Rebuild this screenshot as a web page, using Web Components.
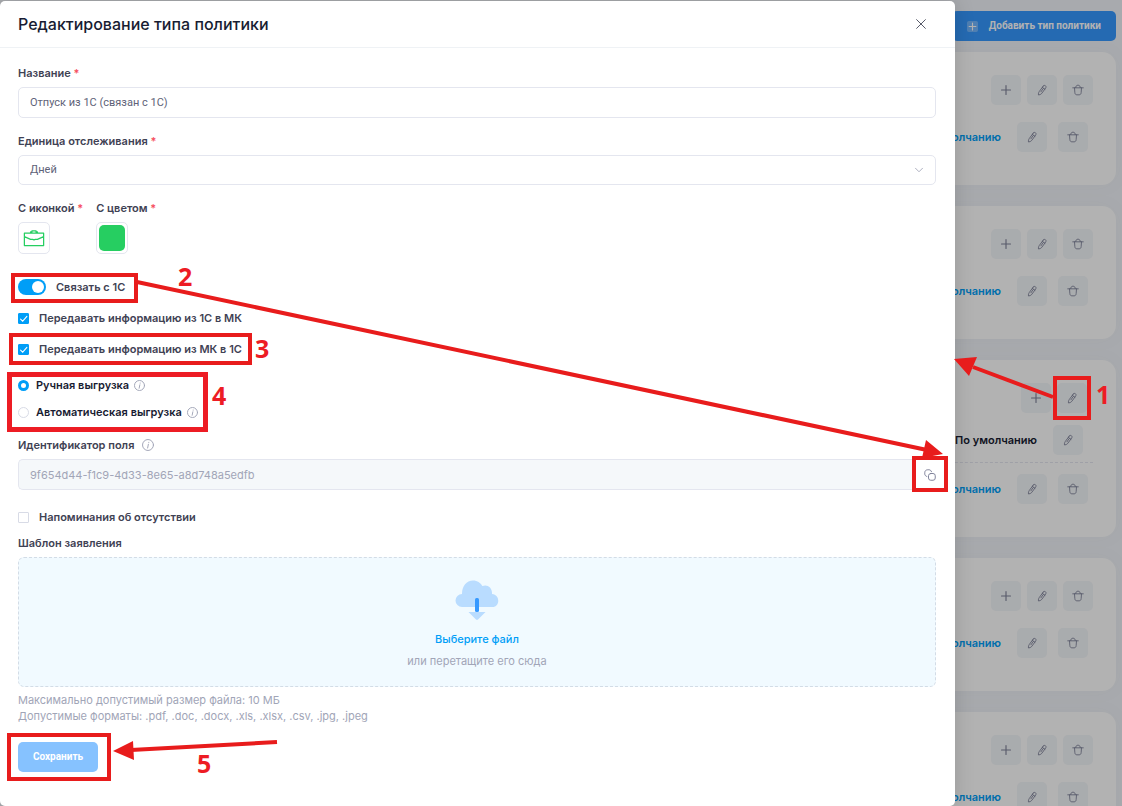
<!DOCTYPE html>
<html lang="ru">
<head>
<meta charset="utf-8">
<title>Редактирование типа политики</title>
<style>
    html, body {
        height: 100%;
        margin: 0;
    }

    body {
        position: relative;
        overflow: hidden;
        background: #f1f4f9;
        color: #3f4254;
        font: 500 11px/16px Inter, "Liberation Sans", sans-serif;
    }
</style>
</head>
<body>
<policy-page></policy-page>
<policy-dialog></policy-dialog>
<guide-marks></guide-marks>

<script>
//#region ICONS
const icons = {
    plus: `<path d="M8 2v12M2 8h12"/>`,
    pencil: `<path d="M9.500 3.400 4.900 9.700c-.8 1.200-1.200 2.600-.9 4 1.400-.1 2.900-.7 3.700-1.800l4.500-6.200c.6-.9.5-2-.3-2.600-.7-.6-1.900-.5-2.400.3zM8.400 5l3 2.200M9.500 6.200 6.800 10"/>`,
    trash: `<path d="M2 5.500h12M4 5.500l.4 5.500c.2 1.900 1.100 2.500 2.500 2.500h2.200c1.400 0 2.300-.6 2.500-2.500l.4-5.500M5.400 5.200C5.400 3.500 6.400 2.500 8 2.500s2.600 1 2.600 2.700"/>`,
    close: `<path d="m3 3 10 10M13 3 3 13"/>`,
    chevron: `<path d="m4 6 4 4 4-4"/>`,
    info: `<circle cx="8" cy="8" r="7.300"/><path d="M8.500 7 7.500 12M9 4.400v.2"/>`,
    copy: `<rect x="6" y="6" width="9" height="9" rx="3"/><path d="M3.800 10C2.300 9.600 1 8.300 1 6.500V5c0-2.300 1.600-4 4-4h1.500c1.700 0 3 1 3.500 2.600"/>`,
    briefcase: `<path d="M1 4.500h14v9H1zM5.500 4.500V3.600h1V2.800h3v.8h1v.9M1 7l4.500 2H7l1 .4L9 9h1.500L15 7"/>`
}

class AppIcon extends HTMLElement {
    connectedCallback() {
        const root = this.attachShadow({ mode: "open" })
        root.innerHTML = /*html*/`
            <style>
                :host { display: inline-flex; flex: none; width: var(--icon, 14px); height: var(--icon, 14px); }
                svg { width: 100%; height: 100%; fill: none; stroke: currentColor; stroke-width: var(--stroke, 1); stroke-linecap: round; stroke-linejoin: round; }
            </style>
            <svg viewBox="0 0 16 16" aria-hidden="true">${icons[this.getAttribute("name")]}</svg>
        `
    }
}
customElements.define("app-icon", AppIcon)
//#endregion ICONS

//#region POLICY LIST
class IconButton extends HTMLElement {
    connectedCallback() {
        const root = this.attachShadow({ mode: "open" })
        root.innerHTML = /*html*/`
            <style>
                :host { display: inline-flex; }
                button {
                    display: grid;
                    place-items: center;
                    width: 30px;
                    height: 30px;
                    padding: 0;
                    border: 0;
                    border-radius: 5px;
                    background: #f3f6f9;
                    color: #7e8299;
                }
                app-icon[name="plus"] { --icon: 12px; --stroke: 1.5; }
            </style>
            <button type="button" aria-label="${this.getAttribute("label")}">
                <app-icon name="${this.getAttribute("icon")}"></app-icon>
            </button>
        `
    }
}
customElements.define("icon-button", IconButton)

class PolicyCard extends HTMLElement {
    connectedCallback() {
        const own = this.hasAttribute("own")
        const root = this.attachShadow({ mode: "open" })
        root.innerHTML = /*html*/`
            <style>
                :host {
                    display: block;
                    padding: 23px 23px 33px;
                    border-radius: 14px;
                    background: #fff;
                    box-shadow: 0 0 20px rgba(76, 87, 125, .04);
                }
                .row { display: flex; justify-content: flex-end; align-items: center; }
                .head { gap: 6px; margin-bottom: 17px; }
                .own .head { padding-right: 6px; margin-bottom: 12px; }
                .rule { gap: 11px; padding-right: 5px; }
                .current { gap: 16px; padding: 0 10px 7px 0; margin-bottom: 11px; border-bottom: 1px dashed #e4e6ef; }
                a { margin-right: 5px; color: #009ef7; text-decoration: none; }
                a, strong { font-size: 11px; font-weight: 600; }
                strong { color: #181c32; }
            </style>
            <div class="${own ? "own" : ""}">
                <div class="row head">
                    <icon-button icon="plus" label="Добавить"></icon-button>
                    <icon-button icon="pencil" label="Изменить"></icon-button>
                    ${own ? "" : `<icon-button icon="trash" label="Удалить"></icon-button>`}
                </div>
                ${own ? `
                <div class="row current">
                    <strong>По умолчанию</strong>
                    <icon-button icon="pencil" label="Изменить"></icon-button>
                </div>` : ""}
                <div class="row rule">
                    <a href="#">По умолчанию</a>
                    <icon-button icon="pencil" label="Изменить"></icon-button>
                    <icon-button icon="trash" label="Удалить"></icon-button>
                </div>
            </div>
        `
    }
}
customElements.define("policy-card", PolicyCard)

class PolicyPage extends HTMLElement {
    connectedCallback() {
        const root = this.attachShadow({ mode: "open" })
        root.innerHTML = /*html*/`
            <style>
                :host { display: block; height: 100%; overflow: hidden; }
                main { display: flex; flex-direction: column; gap: 21px; padding: 11px 6px 0; }
                .add {
                    display: flex;
                    align-self: flex-end;
                    align-items: center;
                    gap: 11px;
                    height: 30px;
                    margin-bottom: -10px;
                    padding: 0 15px;
                    border: 0;
                    border-radius: 5px;
                    background: #3699ff;
                    color: #fff;
                    font: 700 10px/16px Roboto, sans-serif;
                }
                .add app-icon { --icon: 9px; --stroke: 2; padding: 1px; border-radius: 2px; background: rgba(255, 255, 255, .3); }
                .shade { position: absolute; inset: 0; background: rgba(0, 0, 0, .3); }
            </style>
            <main>
                <button class="add" type="button"><app-icon name="plus"></app-icon>Добавить тип политики</button>
                <policy-card></policy-card>
                <policy-card></policy-card>
                <policy-card own></policy-card>
                <policy-card></policy-card>
                <policy-card></policy-card>
            </main>
            <div class="shade"></div>
        `
    }
}
customElements.define("policy-page", PolicyPage)
//#endregion POLICY LIST

//#region FORM CONTROLS
const fieldStyle = /*css*/`
    :host { display: block; }
    label { color: #3f4254; font-weight: 600; }
    .line { display: flex; align-items: center; gap: 8px; margin-bottom: 6px; }
    .required { color: #f64e60; }
    input, select {
        box-sizing: border-box;
        width: 100%;
        height: 31px;
        margin: 0;
        padding: 0 11px;
        border: 1px solid #e4e6ef;
        border-radius: 5px;
        background: #fff;
        color: #5e6278;
        font: 400 11px/16px Roboto, sans-serif;
    }
`
const star = `<span class="required">*</span>`

class TextField extends HTMLElement {
    connectedCallback() {
        const root = this.attachShadow({ mode: "open" })
        root.innerHTML = /*html*/`
            <style>${fieldStyle}</style>
            <div class="line"><label for="field">${this.getAttribute("label")} ${star}</label></div>
            <input id="field" type="text" value="${this.getAttribute("value")}">
        `
    }
}
customElements.define("text-field", TextField)

class SelectField extends HTMLElement {
    connectedCallback() {
        const root = this.attachShadow({ mode: "open" })
        root.innerHTML = /*html*/`
            <style>
                ${fieldStyle}
                .box { display: grid; align-items: center; }
                .box > * { grid-area: 1 / 1; }
                select { appearance: none; height: 30px; }
                app-icon { --icon: 14px; justify-self: end; margin-right: 10px; color: #a1a5b7; pointer-events: none; }
            </style>
            <div class="line"><label for="field">${this.getAttribute("label")} ${star}</label></div>
            <div class="box">
                <select id="field"><option>${this.getAttribute("value")}</option></select>
                <app-icon name="chevron"></app-icon>
            </div>
        `
    }
}
customElements.define("select-field", SelectField)

class CopyField extends HTMLElement {
    connectedCallback() {
        const root = this.attachShadow({ mode: "open" })
        root.innerHTML = /*html*/`
            <style>
                ${fieldStyle}
                .line app-icon { --icon: 12px; --stroke: 1.3; color: #a1a5b7; }
                .box { display: flex; }
                input { flex: 1; min-width: 0; border-right: 0; border-radius: 5px 0 0 5px; background: #f5f8fa; color: #a1a5b7; font-family: Inter, sans-serif; }
                button { display: flex; align-items: center; justify-content: flex-end; width: 20px; padding: 0; border: 0; background: #fff; color: #7e8299; }
                button app-icon { --icon: 12px; --stroke: 1.3; }
            </style>
            <div class="line"><label for="field">${this.getAttribute("label")}</label><app-icon name="info"></app-icon></div>
            <div class="box">
                <input id="field" type="text" readonly value="${this.getAttribute("value")}">
                <button type="button" aria-label="Скопировать"><app-icon name="copy"></app-icon></button>
            </div>
        `
        root.querySelector("button").addEventListener("click", () => {
            root.querySelector("input").select()
            document.execCommand("copy")
        })
    }
}
customElements.define("copy-field", CopyField)

class PickButton extends HTMLElement {
    connectedCallback() {
        const root = this.attachShadow({ mode: "open" })
        root.innerHTML = /*html*/`
            <style>
                ${fieldStyle}
                button {
                    display: grid;
                    place-items: center;
                    width: 32px;
                    height: 32px;
                    padding: 0;
                    border: 1px solid #e4e6ef;
                    border-radius: 5px;
                    background: #fff;
                }
            </style>
            <div class="line"><label for="pick">${this.getAttribute("label")} ${star}</label></div>
            <button id="pick" type="button"><slot></slot></button>
        `
    }
}
customElements.define("pick-button", PickButton)

// type: switch, checkbox or radio
class ChoiceInput extends HTMLElement {
    connectedCallback() {
        const type = this.getAttribute("type")
        const root = this.attachShadow({ mode: "open" })
        root.innerHTML = /*html*/`
            <style>
                :host { display: flex; align-items: center; height: 18px; }
                label { display: flex; align-items: center; gap: 10px; color: #3f4254; font-weight: 600; }
                input { appearance: none; flex: none; box-sizing: border-box; width: 11px; height: 11px; margin: 0; border: 1px solid #d8dbe6; background: #fff; }
                .checkbox input { border-radius: 1px; }
                .checkbox input:checked {
                    border-color: #009ef7;
                    background: #009ef7 url('data:image/svg+xml,<svg xmlns="http://www.w3.org/2000/svg" viewBox="0 0 10 10"><path d="m2 5.300 2 2 4-4.500" fill="none" stroke="white" stroke-linecap="round"/></svg>') center / 10px no-repeat;
                }
                .radio { gap: 7px; color: #181c32; }
                .radio input { border-radius: 50%; }
                .radio input:checked { border: 3px solid #009ef7; }
                .switch input { display: flex; align-items: center; justify-content: flex-end; width: 28px; height: 16px; padding: 0 2px; border: 0; border-radius: 8px; background: #e4e6ef; }
                .switch input::before { content: ""; width: 12px; height: 12px; border-radius: 50%; background: #fff; }
                .switch input:checked { background: #009ef7; }
                app-icon { --icon: 11px; --stroke: 1.4; margin-left: 5px; color: #a1a5b7; }
            </style>
            <label class="${type}">
                <input type="${type === "radio" ? "radio" : "checkbox"}" ${this.hasAttribute("checked") ? "checked" : ""}>
                <slot></slot>
            </label>
            ${type === "radio" ? `<app-icon name="info"></app-icon>` : ""}
        `
    }
}
customElements.define("choice-input", ChoiceInput)

class FileDrop extends HTMLElement {
    connectedCallback() {
        const root = this.attachShadow({ mode: "open" })
        root.innerHTML = /*html*/`
            <style>
                :host { display: block; }
                .title { margin-bottom: 6px; font-weight: 600; }
                .drop {
                    display: flex;
                    flex-direction: column;
                    align-items: center;
                    gap: 6px;
                    padding: 22px 0 17px;
                    border: 1px dashed #d3dce6;
                    border-radius: 6px;
                    background: #f1faff;
                    color: #a1a5b7;
                    font-weight: 400;
                }
                svg { width: 44px; height: 40px; margin-bottom: 5px; }
                a { color: #009ef7; font-weight: 500; text-decoration: none; }
                p { margin: 5px 0 0; color: #a1a5b7; font-weight: 400; }
            </style>
            <div class="title">Шаблон заявления</div>
            <div class="drop">
                <svg viewBox="0 0 44 40" aria-hidden="true">
                    <path fill="#b9dcff" d="M7 27a6.500 6.500 0 0 1 0-13C7 6 11.500 .5 18 .5c4.500 0 7.500 2.400 9.300 5.500C32.500 4 37.500 7.500 37 14 45.500 14.500 45 27 37.500 27zM13.500 32h17l-7.500 7.500q-1 .8-2 0z"/>
                    <rect x="20" y="18" width="4" height="14" rx="1.500" fill="#3699ff"/>
                </svg>
                <a href="#">Выберите файл</a>
                <span>или перетащите его сюда</span>
            </div>
            <p>Максимально допустимый размер файла: 10 МБ<br>Допустимые форматы: .pdf, .doc, .docx, .xls, .xlsx, .csv, .jpg, .jpeg</p>
        `
    }
}
customElements.define("file-drop", FileDrop)
//#endregion FORM CONTROLS

class PolicyDialog extends HTMLElement {
    connectedCallback() {
        const root = this.attachShadow({ mode: "open" })
        root.innerHTML = /*html*/`
            <style>
                :host {
                    position: absolute;
                    inset: 1px 167px 0 0;
                    border-radius: 5px;
                    background: #fff;
                    box-shadow: 0 0 20px rgba(0, 0, 0, .15);
                }
                header { display: flex; align-items: center; justify-content: space-between; height: 46px; padding: 0 27px 0 18px; border-bottom: 1px solid #eff2f5; }
                h1 { margin: 0; color: #181c32; font-size: 16px; font-weight: 500; line-height: 20px; }
                .close { display: flex; padding: 0; border: 0; background: none; color: #3f4254; }
                form { display: flex; flex-direction: column; gap: 15px; padding: 17px 19px 0 18px; }
                .picks { display: flex; gap: 13px; }
                .picks app-icon { --icon: 22px; --stroke: .9; color: #26ce61; }
                .swatch { width: 26px; height: 26px; border-radius: 5px; background: #26ce61; }
                .checks { display: flex; flex-direction: column; gap: 13px; margin-top: 9px; }
                .radios { display: flex; flex-direction: column; gap: 9px; margin: 3px 0 1px; }
                .remind { display: flex; flex-direction: column; gap: 9px; margin-top: 3px; }
                .save { align-self: flex-start; width: 80px; height: 30px; margin-top: 3px; padding: 0; border: 0; border-radius: 5px; background: #86c2ff; color: #fff; font: 700 10px/16px Roboto, sans-serif; }
            </style>
            <header>
                <h1>Редактирование типа политики</h1>
                <button class="close" type="button" aria-label="Закрыть"><app-icon name="close"></app-icon></button>
            </header>
            <form>
                <text-field label="Название" value="Отпуск из 1С (связан с 1С)"></text-field>
                <select-field label="Единица отслеживания" value="Дней"></select-field>
                <div class="picks">
                    <pick-button label="С иконкой"><app-icon name="briefcase"></app-icon></pick-button>
                    <pick-button label="С цветом"><div class="swatch"></div></pick-button>
                </div>
                <div class="checks">
                    <choice-input type="switch" checked>Связать с 1С</choice-input>
                    <choice-input type="checkbox" checked>Передавать информацию из 1С в МК</choice-input>
                    <choice-input type="checkbox" checked>Передавать информацию из МК в 1С</choice-input>
                </div>
                <div class="radios">
                    <choice-input type="radio" checked>Ручная выгрузка</choice-input>
                    <choice-input type="radio">Автоматическая выгрузка</choice-input>
                </div>
                <copy-field label="Идентификатор поля" value="9f654d44-f1c9-4d33-8e65-a8d748a5edfb"></copy-field>
                <div class="remind">
                    <choice-input type="checkbox">Напоминания об отсутствии</choice-input>
                    <file-drop></file-drop>
                </div>
                <button class="save" type="button">Сохранить</button>
            </form>
        `
    }
}
customElements.define("policy-dialog", PolicyDialog)

// numbered steps drawn over the screen
class GuideMarks extends HTMLElement {
    connectedCallback() {
        const root = this.attachShadow({ mode: "open" })
        root.innerHTML = /*html*/`
            <style>
                :host { position: absolute; top: 0; left: 0; pointer-events: none; }
                svg { display: block; }
                .box { fill: none; stroke: #e81c1c; stroke-width: 4; }
                .line { fill: none; stroke: #e81c1c; stroke-width: 4; }
                .head { fill: #e81c1c; }
                .wide { stroke: #ed1c24; stroke-width: 5; }
                text { fill: #ed1c24; font: 700 25px "Open Sans", "Noto Sans", sans-serif; }
            </style>
            <svg width="1122" height="806" viewBox="0 0 1122 806">
                <path class="line" d="M1053 397 973 367M137 282l790 168M277 742l-146 8"/>
                <path class="head" d="m954 359 23-2-8 19zM943 454l-17-14-4 18zM113 751l20-10 1 19z"/>
                <rect class="box" x="1055" y="378" width="34" height="40"/>
                <rect class="box" x="13" y="275" width="123" height="26"/>
                <rect class="box" x="11" y="335" width="239" height="28"/>
                <rect class="box wide" x="9.500" y="374.500" width="196" height="55"/>
                <rect class="box" x="914" y="458" width="32" height="32"/>
                <rect class="box" x="9" y="735" width="100" height="44"/>
                <text x="1096" y="404">1</text>
                <text x="178" y="286">2</text>
                <text x="255" y="358">3</text>
                <text x="212" y="405">4</text>
                <text x="197" y="773">5</text>
            </svg>
        `
    }
}
customElements.define("guide-marks", GuideMarks)
</script>
</body>
</html>
